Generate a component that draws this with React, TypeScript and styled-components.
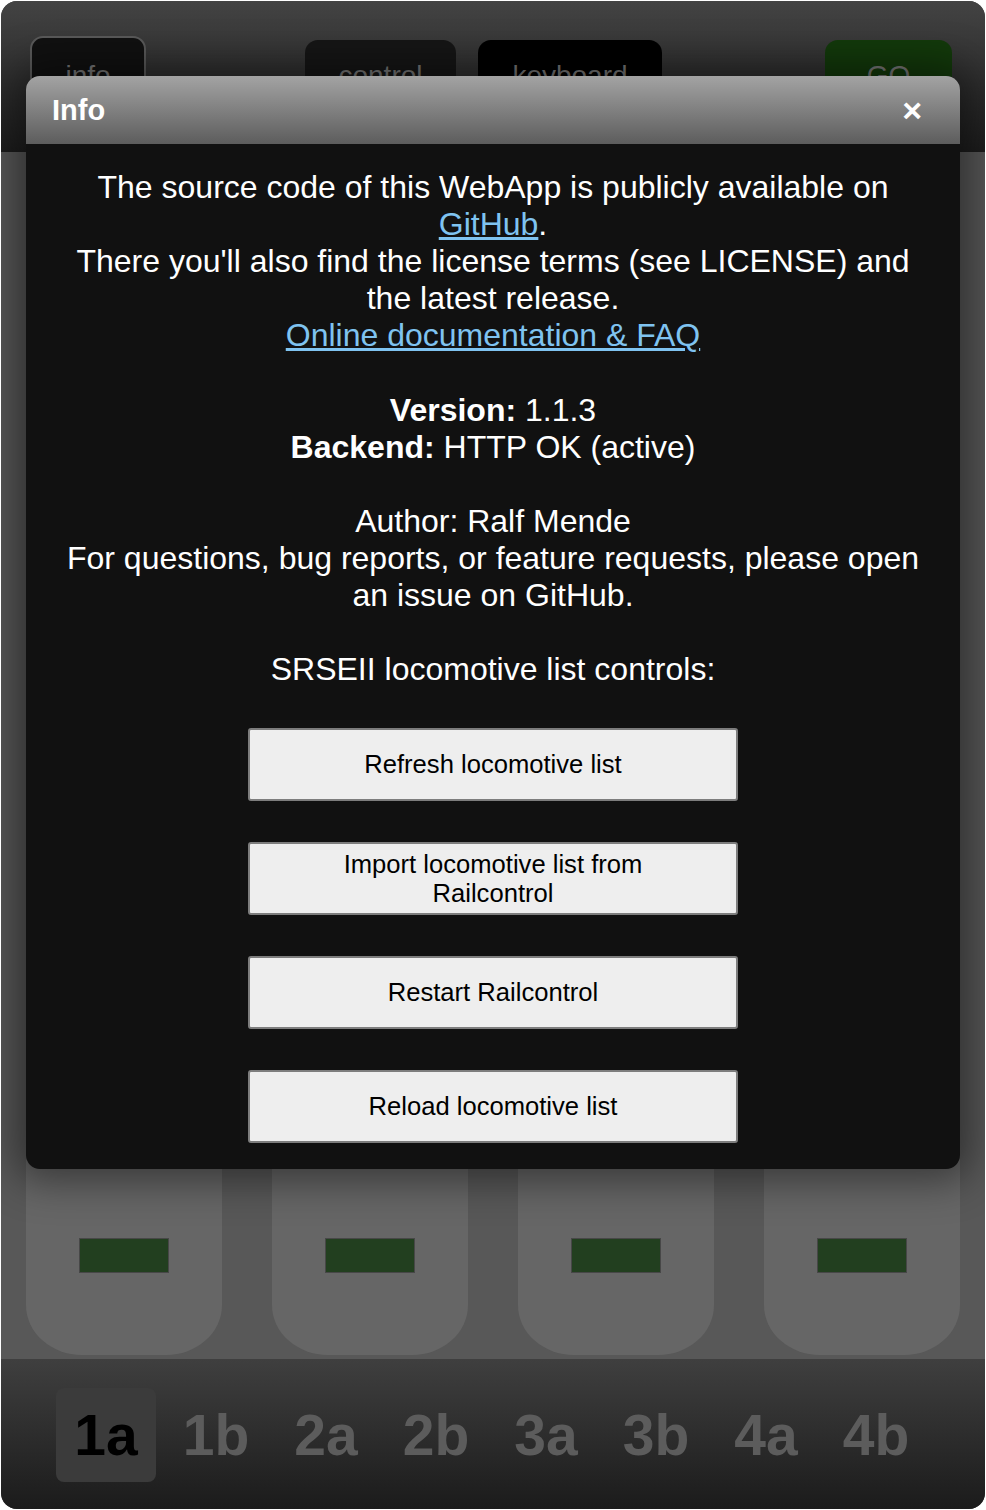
import React from "react";
import styled, { createGlobalStyle } from "styled-components";

const GlobalStyle = createGlobalStyle`
  html, body {
    margin: 0;
    padding: 0;
    background: #ffffff;
  }
  body {
    font-family: "Liberation Sans", Arial, sans-serif;
  }
  * { box-sizing: border-box; }
`;

const Frame = styled.div`
  position: relative;
  margin: 1px;
  width: 984px;
  height: 1508px;
  border-radius: 16px;
  overflow: hidden;
  display: flex;
  flex-direction: column;
  background: #585858;
  font-family: "Liberation Sans", Arial, sans-serif;
`;

const TopBar = styled.header`
  height: 151px;
  flex: 0 0 151px;
  display: flex;
  align-items: flex-start;
  padding: 35px 33px 0 29px;
  background: linear-gradient(to bottom, #434343, #1d1d1d);
`;

const TopButton = styled.div<{ $bg: string; $width: number; $ml?: number; $outlined?: boolean }>`
  width: ${(p) => p.$width}px;
  height: ${(p) => (p.$outlined ? 80 : 72)}px;
  margin-left: ${(p) => p.$ml ?? 0}px;
  margin-top: ${(p) => (p.$outlined ? 0 : 4)}px;
  background: ${(p) => p.$bg};
  border-radius: 13px;
  border: ${(p) => (p.$outlined ? "2px solid #5a5a5a" : "none")};
  display: flex;
  align-items: center;
  justify-content: center;
  color: #787878;
  font-size: 28px;
`;

const Spacer = styled.div`
  flex: 1;
`;

const Content = styled.main`
  flex: 1;
  display: flex;
  gap: 50px;
  padding: 18px 25px 4px 25px;
  background: #585858;
`;

const Slot = styled.div`
  width: 196px;
  background: #666666;
  border-radius: 0 0 56px 56px / 0 0 50px 50px;
  display: flex;
  flex-direction: column;
  justify-content: flex-end;
  align-items: center;
  padding-bottom: 82px;
`;

const Indicator = styled.div`
  width: 90px;
  height: 35px;
  background: #223f1f;
  border: 1px solid #474747;
`;

const BottomBar = styled.nav`
  height: 150px;
  flex: 0 0 150px;
  display: flex;
  justify-content: center;
  align-items: flex-start;
  gap: 10px;
  padding: 29px 4px 0 0;
  background: linear-gradient(to bottom, #3f3f3f, #1b1b1b);
`;

const Tab = styled.div<{ $active?: boolean }>`
  width: 100px;
  height: 94px;
  border-radius: 8px;
  background: ${(p) => (p.$active ? "#3b3b3b" : "transparent")};
  color: ${(p) => (p.$active ? "#000000" : "#5c5c5c")};
  font-weight: bold;
  font-size: 57px;
  display: flex;
  align-items: center;
  justify-content: center;
`;

const Modal = styled.section`
  position: absolute;
  left: 25px;
  top: 75px;
  width: 934px;
  border-radius: 14px;
  overflow: hidden;
  background: #111111;
  box-shadow: 0 0 40px 12px rgba(0, 0, 0, 0.45);
`;

const ModalHeader = styled.div`
  height: 68px;
  display: flex;
  align-items: center;
  justify-content: space-between;
  padding: 0 38px 0 26px;
  background: linear-gradient(to bottom, #a3a3a3, #5d5d5d);
`;

const ModalTitle = styled.h2`
  margin: 0;
  color: #ffffff;
  font-size: 29px;
  font-weight: bold;
`;

const CloseButton = styled.span`
  color: #ffffff;
  font-size: 34px;
  font-weight: bold;
  line-height: 1;
`;

const ModalBody = styled.div`
  padding: 25px 40px 26px;
  display: flex;
  flex-direction: column;
  align-items: center;
`;

const InfoText = styled.p`
  margin: 0;
  color: #ffffff;
  font-size: 32px;
  line-height: 37.1px;
  text-align: center;
`;

const Link = styled.a`
  color: #7fc3f0;
  text-decoration: underline;
`;

const ButtonStack = styled.div`
  margin-top: 40px;
  display: flex;
  flex-direction: column;
  gap: 41px;
`;

const ActionButton = styled.button`
  width: 490px;
  height: 73px;
  background: #eeeeee;
  border: 2px solid #7d7d7d;
  border-radius: 3px;
  color: #000000;
  font-family: "Liberation Sans", Arial, sans-serif;
  font-size: 25.6px;
  line-height: 29px;
  padding: 0 60px;
  text-align: center;
`;

const tabs = ["1a", "1b", "2a", "2b", "3a", "3b", "4a", "4b"];

export default function App() {
  return (
    <>
      <GlobalStyle />
      <Frame>
        <TopBar>
          <TopButton $bg="#111111" $width={116} $outlined>
            info
          </TopButton>
          <TopButton $bg="#161616" $width={151} $ml={159}>
            control
          </TopButton>
          <TopButton $bg="#000000" $width={184} $ml={22}>
            keyboard
          </TopButton>
          <Spacer />
          <TopButton $bg="#133a0b" $width={127}>
            GO
          </TopButton>
        </TopBar>
        <Content>
          {[0, 1, 2, 3].map((i) => (
            <Slot key={i}>
              <Indicator />
            </Slot>
          ))}
        </Content>
        <BottomBar>
          {tabs.map((t, i) => (
            <Tab key={t} $active={i === 0}>
              {t}
            </Tab>
          ))}
        </BottomBar>
        <Modal>
          <ModalHeader>
            <ModalTitle>Info</ModalTitle>
            <CloseButton>×</CloseButton>
          </ModalHeader>
          <ModalBody>
            <InfoText>
              The source code of this WebApp is publicly available on <Link href="#">GitHub</Link>.
              <br />
              There you'll also find the license terms (see LICENSE) and the latest release.
              <br />
              <Link href="#">Online documentation &amp; FAQ</Link>
              <br />
              <br />
              <b>Version:</b> 1.1.3
              <br />
              <b>Backend:</b> HTTP OK (active)
              <br />
              <br />
              Author: Ralf Mende
              <br />
              For questions, bug reports, or feature requests, please open an issue on GitHub.
              <br />
              <br />
              SRSEII locomotive list controls:
            </InfoText>
            <ButtonStack>
              <ActionButton>Refresh locomotive list</ActionButton>
              <ActionButton>Import locomotive list from Railcontrol</ActionButton>
              <ActionButton>Restart Railcontrol</ActionButton>
              <ActionButton>Reload locomotive list</ActionButton>
            </ButtonStack>
          </ModalBody>
        </Modal>
      </Frame>
    </>
  );
}
